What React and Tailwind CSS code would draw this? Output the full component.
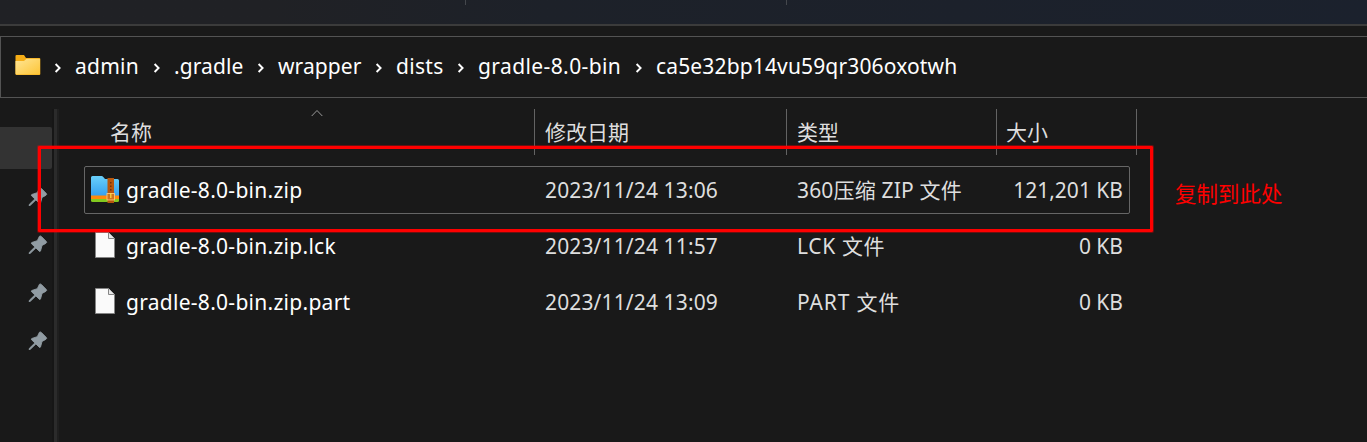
import React from "react";

const crumbs = [
  { label: "admin", cls: "w-[99px]", text: "tracking-[0.25px]" },
  { label: ".gradle", cls: "w-[104px]", text: "tracking-[0.1px]" },
  { label: "wrapper", cls: "w-[118px]", text: "tracking-[0.1px]" },
  { label: "dists", cls: "w-[82px]", text: "tracking-[0.3px]" },
  { label: "gradle-8.0-bin", cls: "w-[178px]", text: "tracking-[0.4px]" },
  { label: "ca5e32bp14vu59qr306oxotwh", cls: "w-[330px]", text: "tracking-[0.15px]" },
];

const files = [
  { name: "gradle-8.0-bin.zip", date: "2023/11/24 13:06", type: "360压缩 ZIP 文件", typeCls: "tracking-[0.17px]", size: "121,201 KB", zip: true },
  { name: "gradle-8.0-bin.zip.lck", date: "2023/11/24 11:57", type: "LCK 文件", typeCls: "tracking-[0.65px]", size: "0 KB" },
  { name: "gradle-8.0-bin.zip.part", date: "2023/11/24 13:09", type: "PART 文件", typeCls: "tracking-[0.85px]", size: "0 KB" },
];

function FolderIcon() {
  return (
    <svg width="27" height="22" viewBox="0 0 27 22" className="mb-1 shrink-0">
      <defs>
        <linearGradient id="folder" x1="0" y1="0" x2="1" y2="1">
          <stop offset="0" stopColor="#ffe595" />
          <stop offset="1" stopColor="#fdc536" />
        </linearGradient>
      </defs>
      <path d="M1.500 2Q1.500 1 2.500 1H10L12 4H25.300Q26.300 4 26.300 5V20Q26.300 21 25.300 21H2.500Q1.500 21 1.500 20Z" fill="#f5ad16" />
      <path d="M1.500 7H10L12.500 4.800H25.300Q26 4.800 26 5.500V19.500Q26 20.500 25 20.500H2.500Q1.500 20.500 1.500 19.500Z" fill="url(#folder)" />
    </svg>
  );
}

function Chevron() {
  return (
    <svg width="8" height="10" viewBox="0 0 8 10" className="shrink-0">
      <path d="M1.600 1L5.600 5L1.600 9" fill="none" stroke="#fff" strokeWidth="1.900" />
    </svg>
  );
}

function Pin() {
  return (
    <svg width="20" height="20" viewBox="0 0 20 20">
      <path
        d="M11.500 1.200Q12.500 .6 13.400 1.500L18.300 6.500Q19.200 7.600 17.800 8.400L14 10.400L12.500 16Q12.100 16.900 11.300 16.200L7.900 12.900L2.300 18.300L1.100 18.600L1.400 17.300L6.900 11.900L3.500 8.700Q2.900 7.900 3.800 7.500L9.300 5.700Z"
        fill="#919ca3"
        stroke="#919ca3"
        strokeWidth=".9"
      />
    </svg>
  );
}

function ZipIcon() {
  return (
    <svg width="28" height="28" viewBox="0 0 28 28">
      <defs>
        <linearGradient id="zipblue" x1="0" y1="0" x2="0" y2="1">
          <stop offset="0" stopColor="#69d0fb" />
          <stop offset="1" stopColor="#35a0ef" />
        </linearGradient>
      </defs>
      <path d="M0 1.500Q0 0 1.500 0H10.500Q11.500 0 12.300 1L14 3H26.500Q28 3 28 4.500V20H0Z" fill="url(#zipblue)" />
      <path d="M0 19.500H28V23.500H0Z" fill="#ff8b0b" />
      <path d="M0 23H28V24.500Q28 26 26.500 26H1.500Q0 26 0 24.500Z" fill="#83c91f" />
      <path d="M16.500 2H23V27H16.500Z" fill="#b7560d" />
      <path d="M19 6h1.500v1.500h-1.500zM19 9.500h1.500v1.500h-1.500zM19 13h1.500v1.500h-1.500z" fill="#713009" />
      <rect x="16" y="17.500" width="7.500" height="6.500" fill="#cf751c" stroke="#ffc575" strokeWidth=".9" />
      <path d="M19.800 17V22" stroke="#ffdf46" strokeWidth="1.200" />
    </svg>
  );
}

function FileIcon() {
  return (
    <svg width="28" height="28" viewBox="0 0 28 28">
      <path d="M4.500 1.500H17.500L23.500 7.500V26.500H4.500Z" fill="#fafafa" stroke="#858585" />
      <path d="M17.500 1.500V7.500H23.500" fill="#e8e8e8" stroke="#858585" />
    </svg>
  );
}

function HeaderCell({ children, cls }) {
  return (
    <div className={"h-[46px] shrink-0 border-r border-[#636363] text-[21px] leading-[46px] text-[#dedede] " + cls}>
      {children}
    </div>
  );
}

export default function App() {
  return (
    <div className="relative flex h-[442px] w-[1367px] flex-col overflow-hidden bg-[#191919] font-['Noto_Sans','Noto_Sans_CJK_SC',sans-serif] text-[21px] whitespace-nowrap text-white">
      <div className="flex h-[26px] shrink-0 border-b-2 border-[#3b3b3b] bg-linear-to-r from-[#202125] from-20% via-[#1d2129] via-40% to-[#1b212d]">
        <div className="h-[5px] w-[466px] border-r border-[#44474c]" />
        <div className="h-[5px] w-[321px] border-r border-[#44474c]" />
      </div>

      <nav className="mt-2.5 flex h-[62px] shrink-0 items-center border-y border-l border-[#535353] pl-[13px]">
        <FolderIcon />
        <div className="ml-[13px] flex items-center">
          {crumbs.map((c) => (
            <div key={c.label} className={"flex items-center " + c.cls}>
              <div className="w-[21px] shrink-0 pt-0.5">
                <Chevron />
              </div>
              <span className={"pb-0.5 leading-7 " + c.text}>{c.label}</span>
            </div>
          ))}
        </div>
      </nav>

      <div className="mt-[11px] flex grow">
        <aside className="flex w-[52px] shrink-0 flex-col pt-[18px]">
          <div className="h-[42px] rounded-r-xs bg-[#333333]" />
          <div className="flex flex-col items-end gap-7 pt-[18px] pr-1">
            <Pin />
            <Pin />
            <Pin />
            <Pin />
          </div>
        </aside>
        <div className="w-[7px] shrink-0 border-x-2 border-r-[#1f1f1f] border-l-[#161616] bg-[#2b2b2b]" />

        <main className="flex flex-col">
          <div className="flex">
            <HeaderCell cls="relative w-[476px] pl-[51px]">
              名称
              <svg width="12" height="8" viewBox="0 0 12 8" className="absolute top-0 left-[252px]">
                <path d="M.7 7L6 1.500L11.300 7" fill="none" stroke="#9b9b9b" />
              </svg>
            </HeaderCell>
            <HeaderCell cls="w-[252px] pl-2.5">修改日期</HeaderCell>
            <HeaderCell cls="w-[210px] pl-2.5">类型</HeaderCell>
            <HeaderCell cls="w-[140px] pl-[9px]">大小</HeaderCell>
          </div>

          <div className="mt-[11px] ml-[25px] flex w-[1046px] flex-col gap-2">
            {files.map((f) => (
              <div
                key={f.name}
                className={"flex h-12 items-center rounded-xs border text-[#dedede] " + (f.zip ? "border-[#666666]" : "border-transparent")}
              >
                <div className={"ml-1.5 w-[35px] shrink-0 " + (f.zip ? "" : "pb-0.5")}>{f.zip ? <ZipIcon /> : <FileIcon />}</div>
                <div className="flex grow items-center pt-0.5">
                  <div className="w-[419px] shrink-0 tracking-[0.28px] text-white">{f.name}</div>
                  <div className="w-[252px] shrink-0 tracking-[0.13px]">{f.date}</div>
                  <div className={"w-[180px] shrink-0 " + f.typeCls}>{f.type}</div>
                  <div className="grow pr-1.5 text-right">{f.size}</div>
                </div>
              </div>
            ))}
          </div>
        </main>
      </div>

      <div className="absolute top-[146px] left-[38px] h-[86px] w-[1115px] rounded-[1px] border-3 border-[#fe0000] shadow-[0_0_0_1px_rgba(254,0,0,0.35)]" />
      <div className="absolute top-[178px] left-[1175px] text-[21.5px] leading-8 text-[#fe0000]">复制到此处</div>
    </div>
  );
}
